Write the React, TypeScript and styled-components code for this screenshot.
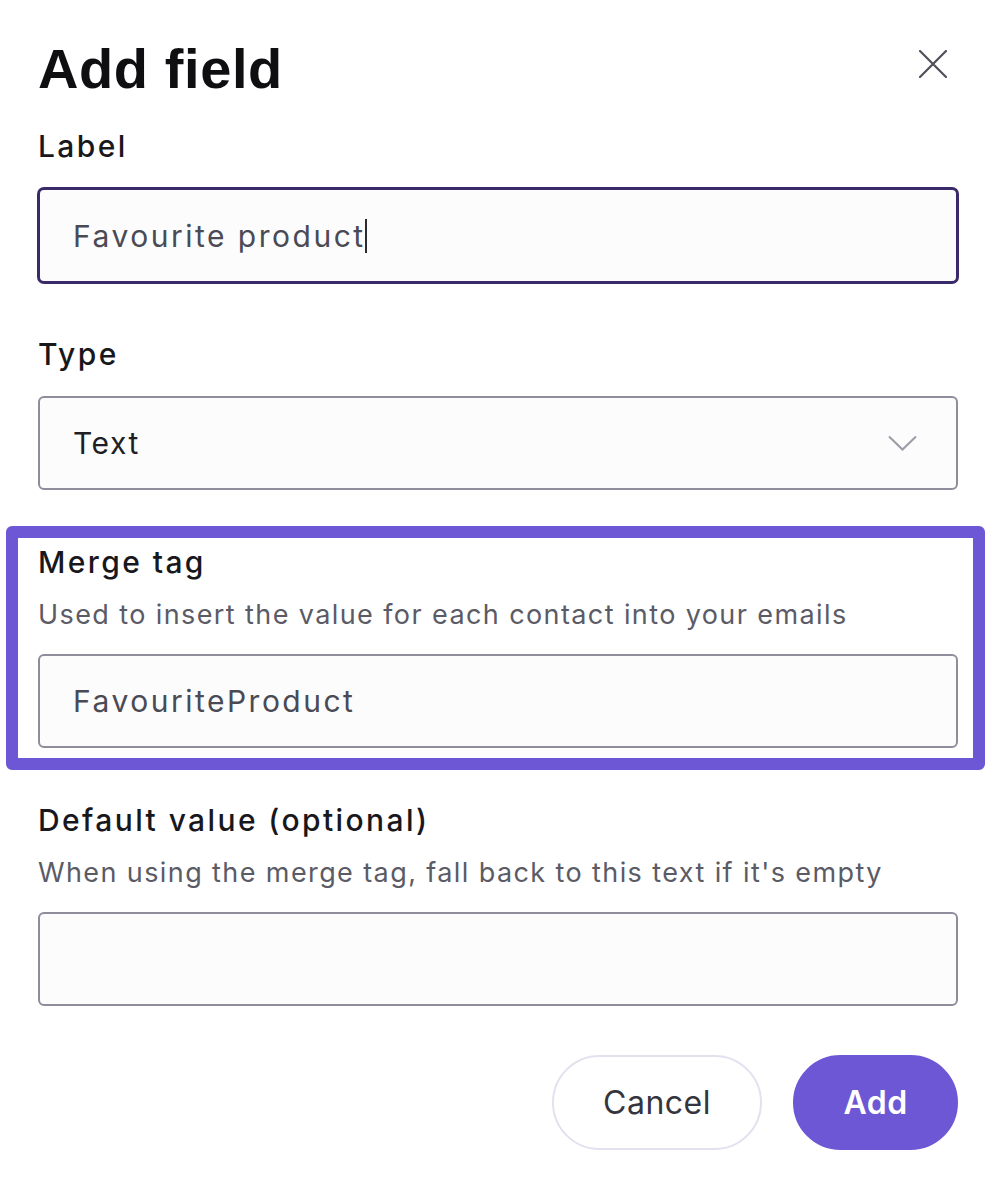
import styled, { createGlobalStyle } from "styled-components"

const GlobalStyle = createGlobalStyle`
    html, body {
        margin: 0;
        padding: 0;
        background: #ffffff;
    }
    body {
        font-family: Inter, "Open Sans", sans-serif;
        color: #1a1a1f;
    }
`

export default function App() {
    return (
        <>
            <GlobalStyle />
            <Page>
                <Header>
                    <Title>Add field</Title>
                    <CloseButton aria-label="Close">
                        <svg width="28" height="28" viewBox="0 0 28 28">
                            <path
                                d="M1 1 L27 27 M27 1 L1 27"
                                stroke="#50505c"
                                strokeWidth="2.2"
                                strokeLinecap="round"
                            />
                        </svg>
                    </CloseButton>
                </Header>

                <Field>
                    <FieldLabel>Label</FieldLabel>
                    <TextBox $focused>
                        Favourite product
                        <Caret />
                    </TextBox>
                </Field>

                <Field $top={53}>
                    <FieldLabel>Type</FieldLabel>
                    <SelectBox>
                        <SelectValue>Text</SelectValue>
                        <svg width="29" height="16" viewBox="0 0 29 16">
                            <path
                                d="M1 1.5 L14.5 14.5 L28 1.5"
                                fill="none"
                                stroke="#9c9ba6"
                                strokeWidth="2"
                            />
                        </svg>
                    </SelectBox>
                </Field>

                <Highlight>
                    <FieldLabel $hint>Merge tag</FieldLabel>
                    <Hint>Used to insert the value for each contact into your emails</Hint>
                    <TextBox>FavouriteProduct</TextBox>
                </Highlight>

                <Field $top={32}>
                    <FieldLabel $hint>Default value (optional)</FieldLabel>
                    <Hint>When using the merge tag, fall back to this text if it's empty</Hint>
                    <TextBox />
                </Field>

                <Actions>
                    <Button>Cancel</Button>
                    <Button $primary>Add</Button>
                </Actions>
            </Page>
        </>
    )
}

const Page = styled.div`
    width: 920px;
    margin: 0 0 0 38px;
    padding: 35px 0 40px;
`
const Header = styled.div`
    display: flex;
    justify-content: space-between;
    align-items: flex-start;
    margin-bottom: 26px;
`
const Title = styled.h1`
    margin: 0;
    font-family: "Liberation Sans", Arial, sans-serif;
    font-size: 56px;
    line-height: 67px;
    font-weight: 700;
    letter-spacing: 0.6px;
    color: #0f0f12;
`
const CloseButton = styled.button`
    margin: 15px 11px 0 0;
    padding: 0;
    border: none;
    background: none;
    display: flex;
    cursor: pointer;
`
const Field = styled.div<{ $top?: number }>`
    margin-top: ${(p) => p.$top ?? 0}px;
`
const FieldLabel = styled.div<{ $hint?: boolean }>`
    font-size: 30px;
    line-height: 36px;
    font-weight: 500;
    letter-spacing: 2.4px;
    color: #18181c;
    margin-bottom: ${(p) => (p.$hint ? 19 : 24)}px;
`
const Hint = styled.div`
    font-size: 27px;
    line-height: 32px;
    letter-spacing: 1.4px;
    color: #5b5b66;
    margin-bottom: 23px;
`
const TextBox = styled.div<{ $focused?: boolean }>`
    box-sizing: border-box;
    height: ${(p) => (p.$focused ? 95 : 94)}px;
    display: flex;
    align-items: center;
    padding: 0 33px;
    border: 2px solid ${(p) => (p.$focused ? "#3a2a6a" : "#8f8d9b")};
    box-shadow: ${(p) => (p.$focused ? "0 0 0 1px #3a2a6a" : "none")};
    border-radius: 6px;
    background: #fcfcfc;
    font-size: 30px;
    letter-spacing: 2.5px;
    color: #4a4a55;
`
const Caret = styled.span`
    display: inline-block;
    width: 2px;
    height: 34px;
    margin-left: -1px;
    background: #2a2a33;
`
const SelectBox = styled.div`
    box-sizing: border-box;
    height: 94px;
    display: flex;
    align-items: center;
    justify-content: space-between;
    padding: 0 39px 0 33px;
    border: 2px solid #8f8d9b;
    border-radius: 6px;
    background: #fcfcfc;
`
const SelectValue = styled.span`
    font-size: 30px;
    letter-spacing: 1.6px;
    color: #1e1e24;
`
const Highlight = styled.section`
    margin: 36px -27px 0 -32px;
    padding: 6px 15px 10px 20px;
    border: 12px solid #6d57d5;
    border-radius: 6px;
`
const Actions = styled.div`
    display: flex;
    justify-content: flex-end;
    gap: 31px;
    margin-top: 49px;
`
const Button = styled.button<{ $primary?: boolean }>`
    box-sizing: border-box;
    height: 95px;
    min-width: ${(p) => (p.$primary ? 165 : 210)}px;
    padding: 0 40px;
    border-radius: 48px;
    border: 2px solid ${(p) => (p.$primary ? "#6d57d5" : "#e3e1f0")};
    background: ${(p) => (p.$primary ? "#6d57d5" : "#ffffff")};
    color: ${(p) => (p.$primary ? "#ffffff" : "#35353d")};
    font-family: Inter, "Open Sans", sans-serif;
    font-size: 32px;
    letter-spacing: 0.5px;
    font-weight: ${(p) => (p.$primary ? 600 : 400)};
    cursor: pointer;
`
